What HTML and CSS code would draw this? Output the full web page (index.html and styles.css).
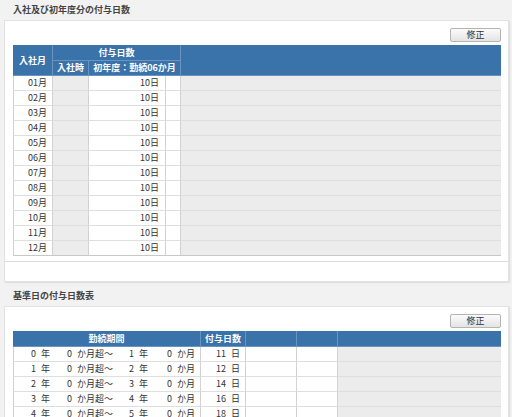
FILE: index.html
```html
<!DOCTYPE html>
<html lang="ja">
<head>
<meta charset="utf-8">
<link rel="stylesheet" href="styles.css">
</head>
<body>
<div class="page">
  <h2 class="sec-title">入社及び初年度分の付与日数</h2>
  <div class="panel">
    <div class="panel-body">
      <div class="toolbar"><button class="btn">修正</button></div>
      <table class="grid t1">
        <colgroup><col style="width:40px"><col style="width:36px"><col style="width:77px"><col style="width:15px"><col></colgroup>
        <thead>
          <tr class="h1"><th rowspan="2" class="first">入社月</th><th colspan="3">付与日数</th><th rowspan="2" class="last"></th></tr>
          <tr class="h2"><th>入社時</th><th colspan="2">初年度：勤続06か月</th></tr>
        </thead>
        <tbody>
          <tr><td class="first r">01月</td><td class="g"></td><td class="r">10日</td><td></td><td class="g last"></td></tr>
          <tr><td class="first r">02月</td><td class="g"></td><td class="r">10日</td><td></td><td class="g last"></td></tr>
          <tr><td class="first r">03月</td><td class="g"></td><td class="r">10日</td><td></td><td class="g last"></td></tr>
          <tr><td class="first r">04月</td><td class="g"></td><td class="r">10日</td><td></td><td class="g last"></td></tr>
          <tr><td class="first r">05月</td><td class="g"></td><td class="r">10日</td><td></td><td class="g last"></td></tr>
          <tr><td class="first r">06月</td><td class="g"></td><td class="r">10日</td><td></td><td class="g last"></td></tr>
          <tr><td class="first r">07月</td><td class="g"></td><td class="r">10日</td><td></td><td class="g last"></td></tr>
          <tr><td class="first r">08月</td><td class="g"></td><td class="r">10日</td><td></td><td class="g last"></td></tr>
          <tr><td class="first r">09月</td><td class="g"></td><td class="r">10日</td><td></td><td class="g last"></td></tr>
          <tr><td class="first r">10月</td><td class="g"></td><td class="r">10日</td><td></td><td class="g last"></td></tr>
          <tr><td class="first r">11月</td><td class="g"></td><td class="r">10日</td><td></td><td class="g last"></td></tr>
          <tr class="end"><td class="first r">12月</td><td class="g"></td><td class="r">10日</td><td></td><td class="g last"></td></tr>
        </tbody>
      </table>
    </div>
    <div class="panel-foot"></div>
  </div>

  <h2 class="sec-title">基準日の付与日数表</h2>
  <div class="panel">
    <div class="panel-body">
      <div class="toolbar"><button class="btn">修正</button></div>
      <table class="grid t2">
        <colgroup><col style="width:42px"><col style="width:63px"><col style="width:35px"><col style="width:48px"><col style="width:45px"><col style="width:51px"><col style="width:41px"><col></colgroup>
        <thead>
          <tr class="h1"><th colspan="4" class="first">勤続期間</th><th>付与日数</th><th></th><th></th><th class="last"></th></tr>
        </thead>
        <tbody>
          <tr><td class="first r n">0 年</td><td class="r n">0 か月超～</td><td class="r n">1 年</td><td class="r">0 か月</td><td class="r">11 日</td><td></td><td></td><td class="g last"></td></tr>
          <tr><td class="first r n">1 年</td><td class="r n">0 か月超～</td><td class="r n">2 年</td><td class="r">0 か月</td><td class="r">12 日</td><td></td><td></td><td class="g last"></td></tr>
          <tr><td class="first r n">2 年</td><td class="r n">0 か月超～</td><td class="r n">3 年</td><td class="r">0 か月</td><td class="r">14 日</td><td></td><td></td><td class="g last"></td></tr>
          <tr><td class="first r n">3 年</td><td class="r n">0 か月超～</td><td class="r n">4 年</td><td class="r">0 か月</td><td class="r">16 日</td><td></td><td></td><td class="g last"></td></tr>
          <tr><td class="first r n">4 年</td><td class="r n">0 か月超～</td><td class="r n">5 年</td><td class="r">0 か月</td><td class="r">18 日</td><td></td><td></td><td class="g last"></td></tr>
        </tbody>
      </table>
    </div>
    <div class="panel-foot"></div>
  </div>
</div>
</body>
</html>
```

FILE: styles.css
```css
html, body {
  margin: 0;
  padding: 0;
  background: #f2f2f2;
  font-family: "Noto Sans CJK JP", "Noto Sans", sans-serif;
  font-size: 9px;
  color: #333;
  overflow: hidden;
}

.page {
  width: 512px;
}

.sec-title {
  margin: 0;
  padding-left: 13px;
  height: 20px;
  line-height: 20px;
  font-size: 9px;
  font-weight: bold;
  color: #444;
}

.panel + .sec-title {
  margin-top: 4px;
}

.panel {
  margin-left: 4px;
  width: 503px;
  background: #fff;
  border: 1px solid #e2e2e2;
  box-shadow: 1px 1px 1px rgba(0, 0, 0, 0.08);
}

.panel-body {
  padding: 7px 7px 5px 8px;
  border-bottom: 1px solid #dcdcdc;
}

.panel-foot {
  height: 19px;
}

.toolbar {
  display: flex;
  justify-content: flex-end;
  margin-bottom: 3px;
}

.btn {
  width: 51px;
  height: 14px;
  padding: 0;
  margin: 0;
  font-family: inherit;
  font-size: 9px;
  line-height: 12px;
  color: #333;
  background: linear-gradient(#fbfbfb, #e4e4e4);
  border: 1px solid #b4b4b4;
  border-radius: 2px;
}

.grid {
  width: 488px;
  table-layout: fixed;
  border-collapse: separate;
  border-spacing: 0;
}

.grid th {
  background: #3a72aa;
  color: #fff;
  font-weight: bold;
  font-size: 9px;
  padding: 0;
  text-align: center;
  border-right: 1px solid #6b93c0;
  border-bottom: 1px solid #6b93c0;
}

.grid .h1 th {
  line-height: 15px;
}

.grid .h2 th {
  line-height: 14px;
}

.grid th.last {
  border-right: 0;
}

.grid td {
  line-height: 14px;
  padding: 0;
  border-right: 1px solid #d2d2d2;
  border-bottom: 1px solid #dedede;
  white-space: nowrap;
  overflow: hidden;
}

.grid td.first {
  border-left: 1px solid #d2d2d2;
}

.grid td.last {
  border-right: 0;
}

.grid tr.end td {
  border-bottom: 1px solid #c8c8c8;
}

.grid td.r {
  text-align: right;
  padding-right: 5px;
}

.t1 td.r:nth-child(3) {
  padding-right: 6px;
}

.grid td.g {
  background: #ececec;
}

.t2 td {
  word-spacing: 3px;
}

.t2 td.n {
  border-right: 0;
}
```
